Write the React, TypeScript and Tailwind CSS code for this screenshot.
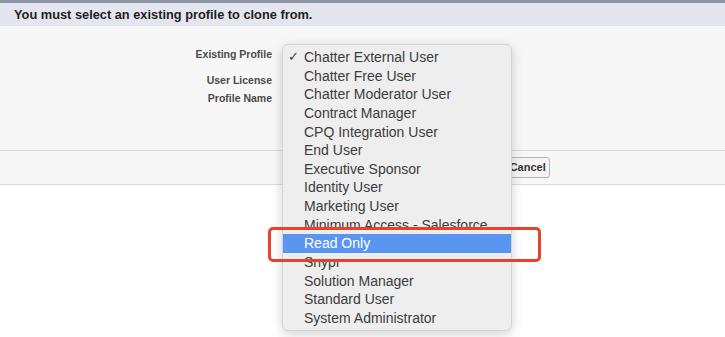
import React from "react";

const items = [
  "Chatter External User",
  "Chatter Free User",
  "Chatter Moderator User",
  "Contract Manager",
  "CPQ Integration User",
  "End User",
  "Executive Sponsor",
  "Identity User",
  "Marketing User",
  "Minimum Access - Salesforce",
  "Read Only",
  "Snypr",
  "Solution Manager",
  "Standard User",
  "System Administrator",
];

export default function App() {
  return (
    <div
      className="relative w-[725px] h-[337px] overflow-hidden bg-white"
      style={{ fontFamily: '"Liberation Sans", Arial, sans-serif' }}
    >
      <div className="border-t-[3px] border-[#8c94a6] bg-[#e3e6ee] h-[26px] px-[14px]">
        <div className="text-[12.8px] font-bold leading-[23px] text-[#1e1e1e]">
          You must select an existing profile to clone from.
        </div>
      </div>
      <div className="bg-[#f7f7f7] h-[124px] pt-[22px]">
        <div className="w-[272px] flex flex-col items-end text-[10.5px] font-bold text-[#4a4a4a] leading-[12px]">
          <div>Existing Profile</div>
          <div className="mt-[14px]">User License</div>
          <div className="mt-[6px]">Profile Name</div>
        </div>
      </div>
      <div className="bg-[#f7f7f7] h-[35px] border-y border-[#dadada] flex items-center pl-[444px] gap-[4px]">
        <button className="h-[21px] px-[4px] rounded-[3px] border border-[#b5b5b5] bg-[#f4f4f4] text-[11px] font-bold text-[#333] leading-none">
          Continue
        </button>
        <button className="h-[21px] px-[3px] rounded-[3px] border border-[#b5b5b5] bg-[#f4f4f4] text-[11px] font-bold text-[#333] leading-none">
          Cancel
        </button>
      </div>

      {/* Dropdown menu */}
      <div className="absolute left-[282px] top-[44px] w-[230px] h-[287px] rounded-[6px] bg-[#eeeeee] border border-[#d4d4d4] shadow-[0_3px_12px_rgba(0,0,0,0.18)] py-[3px]">
        {items.map((it, i) => (
          <div
            key={it}
            className={
              "relative h-[18.64px] leading-[18.64px] pl-[21px] text-[14px] whitespace-nowrap " +
              (it === "Read Only" ? "bg-[#5a95f2] text-white" : "text-[#3c3c3c]")
            }
          >
            {i === 0 && (
              <span className="absolute left-[5px] top-0 text-[13px] text-[#3c3c3c]">✓</span>
            )}
            {it}
          </div>
        ))}
      </div>

      {/* Annotation */}
      <div className="absolute left-[268px] top-[227px] w-[273px] h-[35px] rounded-[5px] border-[3px] border-[#e5432d]" />
    </div>
  );
}
